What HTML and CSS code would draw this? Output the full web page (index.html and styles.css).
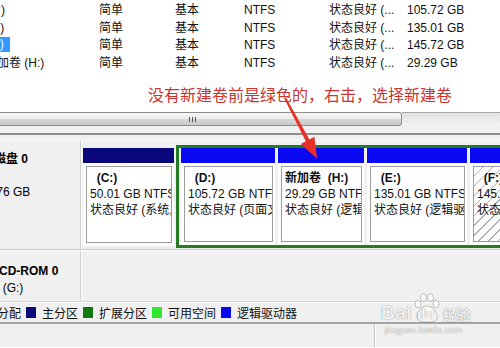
FILE: index.html
```html
<!DOCTYPE html>
<html lang="zh-CN">
<head>
<meta charset="utf-8">
<title>磁盘管理</title>
<link rel="stylesheet" href="styles.css">
</head>
<body>
<div class="screen">
  <div class="vol-list">
    <div class="vrow"><span class="c-name"><span class="nm">(D:)</span></span><span>简单</span><span>基本</span><span>NTFS</span><span>状态良好 (...</span><span>105.72 GB</span></div>
    <div class="vrow"><span class="c-name"><span class="nm">(E:)</span></span><span>简单</span><span>基本</span><span>NTFS</span><span>状态良好 (...</span><span>135.01 GB</span></div>
    <div class="vrow"><span class="c-name"><span class="nm sel">(F:)</span></span><span>简单</span><span>基本</span><span>NTFS</span><span>状态良好 (...</span><span>145.72 GB</span></div>
    <div class="vrow"><span class="c-name"><span class="nm">新加卷 (H:)</span></span><span>简单</span><span>基本</span><span>NTFS</span><span>状态良好 (...</span><span>29.29 GB</span></div>
  </div>

  <div class="note">没有新建卷前是绿色的，右击，选择新建卷</div>

  <div class="hscroll">
    <div class="thumb"><span class="grip"></span></div>
    <div class="track"></div>
  </div>
  <div class="gap"></div>
  <div class="splitter"></div>

  <div class="disks">
    <div class="disk-row disk0">
      <div class="label">
        <div class="l-title t-disk">磁盘 0</div>
        <div class="l-line t-size">基本</div>
        <div class="l-line t-size">465.76 GB</div>
        <div class="l-line t-size">联机</div>
      </div>
      <div class="map">
        <div class="part primary w-c">
          <div class="bar"></div>
          <div class="body"><div class="box">
            <div class="vname">&nbsp;&nbsp;(C:)</div>
            <div>50.01 GB NTFS</div>
            <div>状态良好 (系统, 启动, 页面文件, 活动, 故障转储, 主分区)</div>
          </div></div>
        </div>
        <div class="extended">
          <div class="part logical w-d">
            <div class="bar"></div>
            <div class="body"><div class="box">
              <div class="vname">&nbsp;&nbsp;(D:)</div>
              <div>105.72 GB NTFS</div>
              <div>状态良好 (页面文件, 逻辑驱动器)</div>
            </div></div>
          </div>
          <div class="part logical w-h">
            <div class="bar"></div>
            <div class="body"><div class="box">
              <div class="vname">新加卷&nbsp;&nbsp;(H:)</div>
              <div>29.29 GB NTFS</div>
              <div>状态良好 (逻辑驱动器)</div>
            </div></div>
          </div>
          <div class="part logical w-e">
            <div class="bar"></div>
            <div class="body"><div class="box">
              <div class="vname">&nbsp;&nbsp;(E:)</div>
              <div>135.01 GB NTFS</div>
              <div>状态良好 (逻辑驱动器)</div>
            </div></div>
          </div>
          <div class="part logical w-f">
            <div class="bar"></div>
            <div class="body"><div class="box hatched">
              <div class="vname">&nbsp;&nbsp;(F:)</div>
              <div>145.72 GB NTFS</div>
              <div>状态良好 (逻辑驱动器)</div>
            </div></div>
          </div>
        </div>
      </div>
    </div>
    <div class="disk-row cd">
      <div class="label">
        <div class="l-title t-cd">CD-ROM 0</div>
        <div class="l-line t-dvd">DVD (G:)</div>
      </div>
      <div class="map empty"></div>
    </div>
  </div>

  <div class="legend">
    <span class="lg-item first"><i class="sw sw-free"></i>未分配</span>
    <span class="lg-item"><i class="sw sw-primary"></i>主分区</span>
    <span class="lg-item"><i class="sw sw-ext"></i>扩展分区</span>
    <span class="lg-item"><i class="sw sw-avail"></i>可用空间</span>
    <span class="lg-item"><i class="sw sw-logical"></i>逻辑驱动器</span>
  </div>

  <div class="status">
    <div class="st-a"></div>
    <div class="st-b"></div>
  </div>

  <svg class="arrow" width="500" height="348" viewBox="0 0 500 348">
    <polygon points="284.2,98.5 286,97.5 309.4,139.5 314.4,136.8 317.2,158.8 300.8,144 305.8,141.3" fill="#e8302a"/>
  </svg>

  <div class="watermark">
    <div class="wm-top">
      <span class="wm-bai">Bai</span>
      <span class="wm-paw">
        <svg width="28" height="30" viewBox="0 0 28 30">
          <ellipse cx="5" cy="11" rx="3" ry="3.8" />
          <ellipse cx="10.5" cy="4.5" rx="3" ry="3.8" />
          <ellipse cx="17.5" cy="4.5" rx="3" ry="3.8" />
          <ellipse cx="23" cy="11" rx="3" ry="3.8" />
          <path d="M14 13 C8 13 4 20 4 24 C4 28 8 29 14 29 C20 29 24 28 24 24 C24 20 20 13 14 13 Z" />
        </svg>
        <span class="wm-du">du</span>
      </span>
      <span class="wm-jy">经验</span>
    </div>
    <div class="wm-url">jingyan.baidu.com</div>
  </div>
</div>
</body>
</html>
```

FILE: styles.css
```css
* { box-sizing: border-box; }

html, body {
  margin: 0;
  padding: 0;
}

.screen {
  position: relative;
  width: 500px;
  height: 348px;
  overflow: hidden;
  background: #ffffff;
  color: #000;
  font-family: "Liberation Sans", "Noto Sans CJK SC", sans-serif;
  font-size: 12px;
}

/* ---------- volume list ---------- */
.vol-list {
  height: 71px;
  padding-top: 2px;
}

.vrow {
  display: grid;
  grid-template-columns: 99px 76px 69px 85px 78px 1fr;
  height: 17.5px;
  line-height: 17.5px;
  white-space: nowrap;
  color: #111;
}

.c-name { overflow: hidden; }

.nm {
  display: inline-block;
  margin-left: -15px;
}

.nm.sel {
  background: #3399ff;
  color: #fff;
  line-height: 15px;
  height: 15px;
  padding-right: 6px;
  vertical-align: 1px;
}

/* ---------- annotation ---------- */
.note {
  height: 41px;
  padding: 13px 0 0 148px;
  font-family: "Noto Sans CJK SC", sans-serif;
  font-size: 16px;
  line-height: 20px;
  color: #c8352e;
  white-space: nowrap;
}

/* ---------- horizontal scrollbar ---------- */
.hscroll {
  display: flex;
  height: 14px;
}

.thumb {
  width: 402px;
  flex: none;
  border: 1px solid #8e8e8e;
  border-left: none;
  border-radius: 0 3px 3px 0;
  background: linear-gradient(#f7f7f7, #ececec 45%, #d6d6d6 55%, #cacaca);
  display: flex;
  align-items: center;
  padding-left: 189px;
}

.grip {
  width: 7px;
  height: 5px;
  background: repeating-linear-gradient(90deg, #555 0 1px, transparent 1px 3px);
}

.track {
  flex: 1;
  border-top: 1px solid #a6a6a6;
  background: linear-gradient(#e2e2e2, #f2f2f2);
}

.gap {
  height: 7px;
  background: #f0f0f0;
}

.splitter {
  height: 2px;
  background: #8c8c8c;
}

/* ---------- disks ---------- */
.disks {
  background: #f0f0f0;
  padding-top: 5px;
}

.disk-row {
  display: flex;
}

.disk0 {
  height: 110px;
  border-top: 1px solid #fafafa;
  border-bottom: 1px solid #c8c8c8;
}

.cd {
  height: 52px;
  border-top: 1px solid #fdfdfd;
  border-bottom: 1px solid #d6d6d6;
}

.label {
  width: 81px;
  flex: none;
  border-right: 1px solid #d0d0d0;
  overflow: hidden;
  white-space: nowrap;
  line-height: 16.5px;
}

.disk0 .label { padding-top: 10px; }
.cd .label { padding-top: 12px; }

.l-title { font-weight: bold; }

.t-disk { margin-left: -6px; }
.t-size { margin-left: -27px; }
.t-cd { margin-left: -1px; }
.t-dvd { margin-left: -26px; }

.map {
  flex: 1;
  display: flex;
  align-items: flex-start;
  gap: 2px;
  padding: 4px 0 0 1px;
  overflow: hidden;
  border-left: 1px solid #ffffff;
}

.part {
  display: flex;
  flex-direction: column;
  flex: none;
  background: #fdfdfd;
}

.primary {
  margin-top: 3px;
  height: 98px;
}

.w-c { width: 91px; }
.w-d { width: 94px; }
.w-h { width: 86px; }
.w-e { width: 100px; }
.w-f { width: 90px; }

.bar {
  height: 15px;
  flex: none;
}

.primary .bar { background: #08087c; }
.logical .bar { background: #0a0af2; }

.body {
  flex: 1;
  min-height: 0;
  padding: 3px 2px 3px 3px;
}

.box {
  height: 100%;
  border: 1px solid #9c9c9c;
  background: #fff;
  padding: 3px 0 0 3px;
  overflow: hidden;
  white-space: nowrap;
  line-height: 16px;
  color: #111;
}

.box > div {
  overflow: hidden;
}

.vname { font-weight: bold; }

.hatched {
  background: repeating-linear-gradient(135deg, #ffffff 0 6px, #b0b0b0 6px 7px);
}

.extended {
  flex: none;
  display: flex;
  gap: 3px;
  height: 103px;
  border: 3px solid #267a26;
  padding: 0 2px;
}

.extended .part { height: 97px; }

/* ---------- legend ---------- */
.legend {
  height: 20px;
  display: flex;
  align-items: center;
  gap: 5px;
  white-space: nowrap;
  background: #f0f0f0;
  border-top: 1px solid #fcfcfc;
  color: #111;
}

.lg-item {
  display: flex;
  align-items: center;
  flex: none;
}

.lg-item.first { margin-left: -31px; }

.sw {
  display: inline-block;
  width: 10px;
  height: 11px;
  margin-right: 6px;
}

.sw-free { background: #000; }
.sw-primary { background: #0a0a78; }
.sw-ext { background: #107a10; }
.sw-avail { background: #30e830; }
.sw-logical { background: #0808f0; }

/* ---------- status bar ---------- */
.status {
  height: 25px;
  display: flex;
  background: #f0f0f0;
  border-top: 2px solid #a4a4a4;
}

.st-a {
  width: 375px;
  border-right: 1px solid #c4c4c4;
}

.st-b {
  flex: 1;
  border-left: 1px solid #ffffff;
}

/* ---------- overlays ---------- */
.arrow {
  position: absolute;
  left: 0;
  top: 0;
  pointer-events: none;
}

.watermark {
  position: absolute;
  left: 381px;
  top: 291px;
  color: rgba(255, 255, 255, 0.9);
  text-shadow: 0 0 1px rgba(0, 0, 0, 0.4), 0 0 2px rgba(0, 0, 0, 0.15);
  pointer-events: none;
}

.wm-top {
  display: flex;
  align-items: flex-end;
  height: 32px;
}

.wm-bai {
  font-family: "Liberation Sans", sans-serif;
  font-weight: bold;
  font-size: 19px;
  line-height: 20px;
  letter-spacing: 0.5px;
}

.wm-paw {
  position: relative;
  width: 28px;
  height: 30px;
  margin-left: 1px;
}

.wm-paw svg {
  display: block;
  fill: rgba(255, 255, 255, 0.7);
  stroke: rgba(110, 110, 110, 0.4);
  stroke-width: 1;
}

.wm-du {
  position: absolute;
  left: 4px;
  bottom: 2px;
  font-family: "Liberation Sans", sans-serif;
  font-weight: bold;
  font-size: 14px;
  line-height: 14px;
  color: rgba(255, 255, 255, 0.95);
}

.wm-jy {
  font-family: "Noto Sans CJK SC", sans-serif;
  font-weight: bold;
  font-size: 14px;
  line-height: 18px;
  margin-left: 2px;
}

.wm-url {
  font-family: "Liberation Sans", sans-serif;
  font-size: 9px;
  line-height: 11px;
  margin-left: 4px;
  margin-top: 2px;
  letter-spacing: 0.3px;
}
```
